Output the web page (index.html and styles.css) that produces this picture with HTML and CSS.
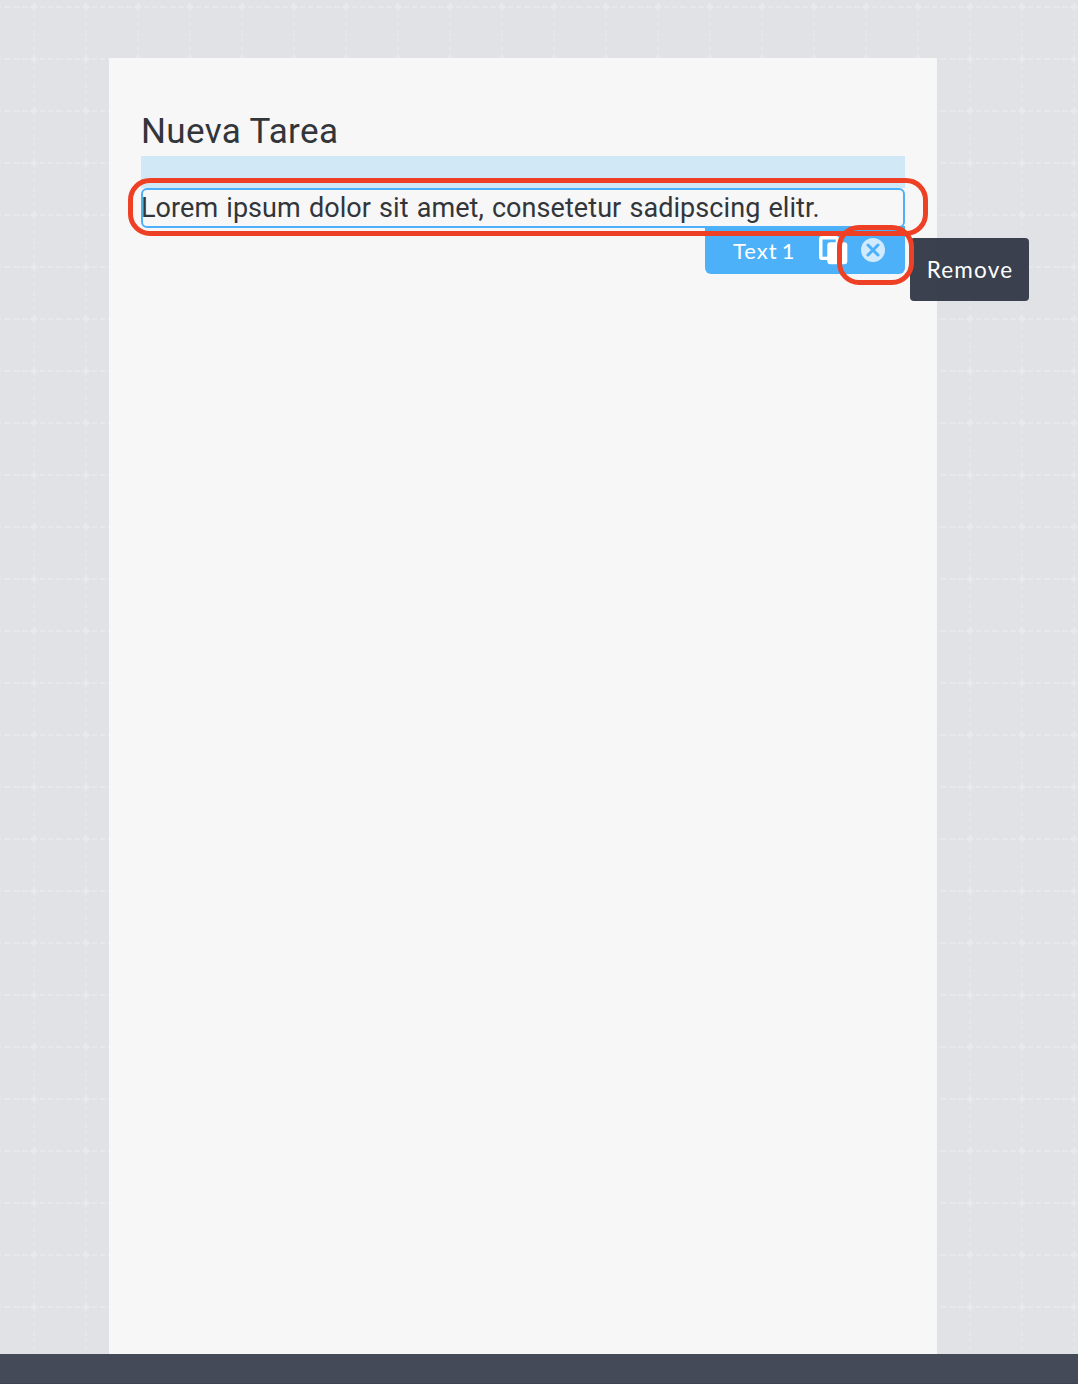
FILE: index.html
```
<!DOCTYPE html>
<html lang="es">
<head>
<meta charset="utf-8">
<title>Nueva Tarea</title>
<link rel="stylesheet" href="styles.css">
</head>
<body>
<div class="editor">
  <main class="canvas">
    <svg class="grid" aria-hidden="true">
      <defs>
        <pattern id="cell" x="8" y="-19" width="52" height="52" patternUnits="userSpaceOnUse">
          <g stroke="#e7e8ea" fill="none">
            <path d="M0 26H3M6 26H12M14 26H20M22 26H30M32 26H37M40 26H45M48 26H52" stroke-width="2"/>
            <path d="M26 0V3M26 6V10M26 14V18M26 21V31M26 34V38M26 42V46M26 50V52" stroke-width="2" stroke="#e5e6e8"/>
            <path d="M24 26H28M26 23V29" stroke-width="3" stroke="#e8e9ea"/>
          </g>
        </pattern>
      </defs>
      <rect width="100%" height="100%" fill="url(#cell)"/>
    </svg>
    <section class="page">
      <h1 class="title">Nueva Tarea</h1>
      <div class="drop-zone"></div>
      <div class="widget">
        <p class="widget-text">Lorem ipsum dolor sit amet, consetetur sadipscing elitr.</p>
        <div class="toolbar">
          <span class="toolbar-label">Text 1</span>
          <svg class="copy" width="30" height="30" viewBox="0 0 30 30">
            <rect x="1" y="1" width="20" height="24" rx="3" fill="#fff"/>
            <rect x="4.500" y="4.500" width="13.200" height="17.200" fill="#4db1fa"/>
            <rect x="9.300" y="7.200" width="20" height="22" rx="3" fill="#fff"/>
          </svg>
          <svg class="remove" width="24" height="24" viewBox="0 0 24 24">
            <circle cx="12" cy="12" r="12" fill="#d1eafd"/>
            <path d="M7 7L17 17M17 7L7 17" stroke="#4db1fa" stroke-width="3" stroke-linecap="round"/>
          </svg>
        </div>
        <div class="mark mark-text"></div>
        <div class="tooltip">Remove</div>
        <div class="mark mark-remove"></div>
      </div>
    </section>
  </main>
  <footer class="status-bar"></footer>
</div>
</body>
</html>
```
FILE: styles.css
```
* { box-sizing: border-box; }
body { margin: 0; }
.editor {
  display: flex;
  flex-direction: column;
  height: 1384px;
  overflow: hidden;
}
.canvas {
  position: relative;
  flex: 1;
  padding: 58px 141px 0 109px;
  background: #e1e2e6;
}
.grid {
  position: absolute;
  inset: 0;
  width: 100%;
  height: 100%;
}
.page {
  position: relative;
  height: 100%;
  padding: 48px 32px 0;
  background: #f7f7f7;
  color: #32363a;
  font-family: Roboto, "Liberation Sans", sans-serif;
}
.title {
  height: 50px;
  margin: 0;
  font-size: 35px;
  font-weight: 400;
  line-height: 52px;
  letter-spacing: 0.35px;
  white-space: nowrap;
}
.drop-zone {
  height: 32px;
  background: #d1e8f6;
}
.widget {
  position: relative;
  height: 40px;
  border: 2px solid #4db1fa;
  border-radius: 6px;
}
.widget-text {
  margin: 0 0 0 -2px;
  font-size: 27px;
  line-height: 36px;
  letter-spacing: 0.07px;
  word-spacing: 1.3px;
  white-space: nowrap;
}
.toolbar {
  position: absolute;
  top: 36px;
  right: -2px;
  display: flex;
  align-items: center;
  width: 200px;
  height: 48px;
  padding-left: 28px;
  border-radius: 0 0 6px 6px;
  background: #4db1fa;
  color: #fff;
  font: 22px/48px Lato, sans-serif;
}
.toolbar-label {
  width: 85px;
  padding-top: 2px;
  line-height: 46px;
  letter-spacing: 1px;
  word-spacing: -2.5px;
}
.copy { margin-right: 13px; }
.tooltip {
  position: absolute;
  top: 48px;
  left: 767px;
  width: 119px;
  height: 63px;
  padding-left: 1px;
  border-radius: 4px;
  background: rgba(51, 57, 71, 0.96);
  color: #fff;
  font: 22.5px/64px Lato, sans-serif;
  letter-spacing: 1.2px;
  text-align: center;
}
.mark {
  position: absolute;
  border: 5px solid #ee4025;
}
.mark-text {
  top: -12px;
  left: -15px;
  width: 800px;
  height: 58px;
  border-radius: 22px;
}
.mark-remove {
  top: 35px;
  left: 694px;
  width: 77px;
  height: 60px;
  border-radius: 22px;
}
.status-bar {
  height: 30px;
  border-bottom: 1px solid #3f434f;
  background: #444a58;
}
```
